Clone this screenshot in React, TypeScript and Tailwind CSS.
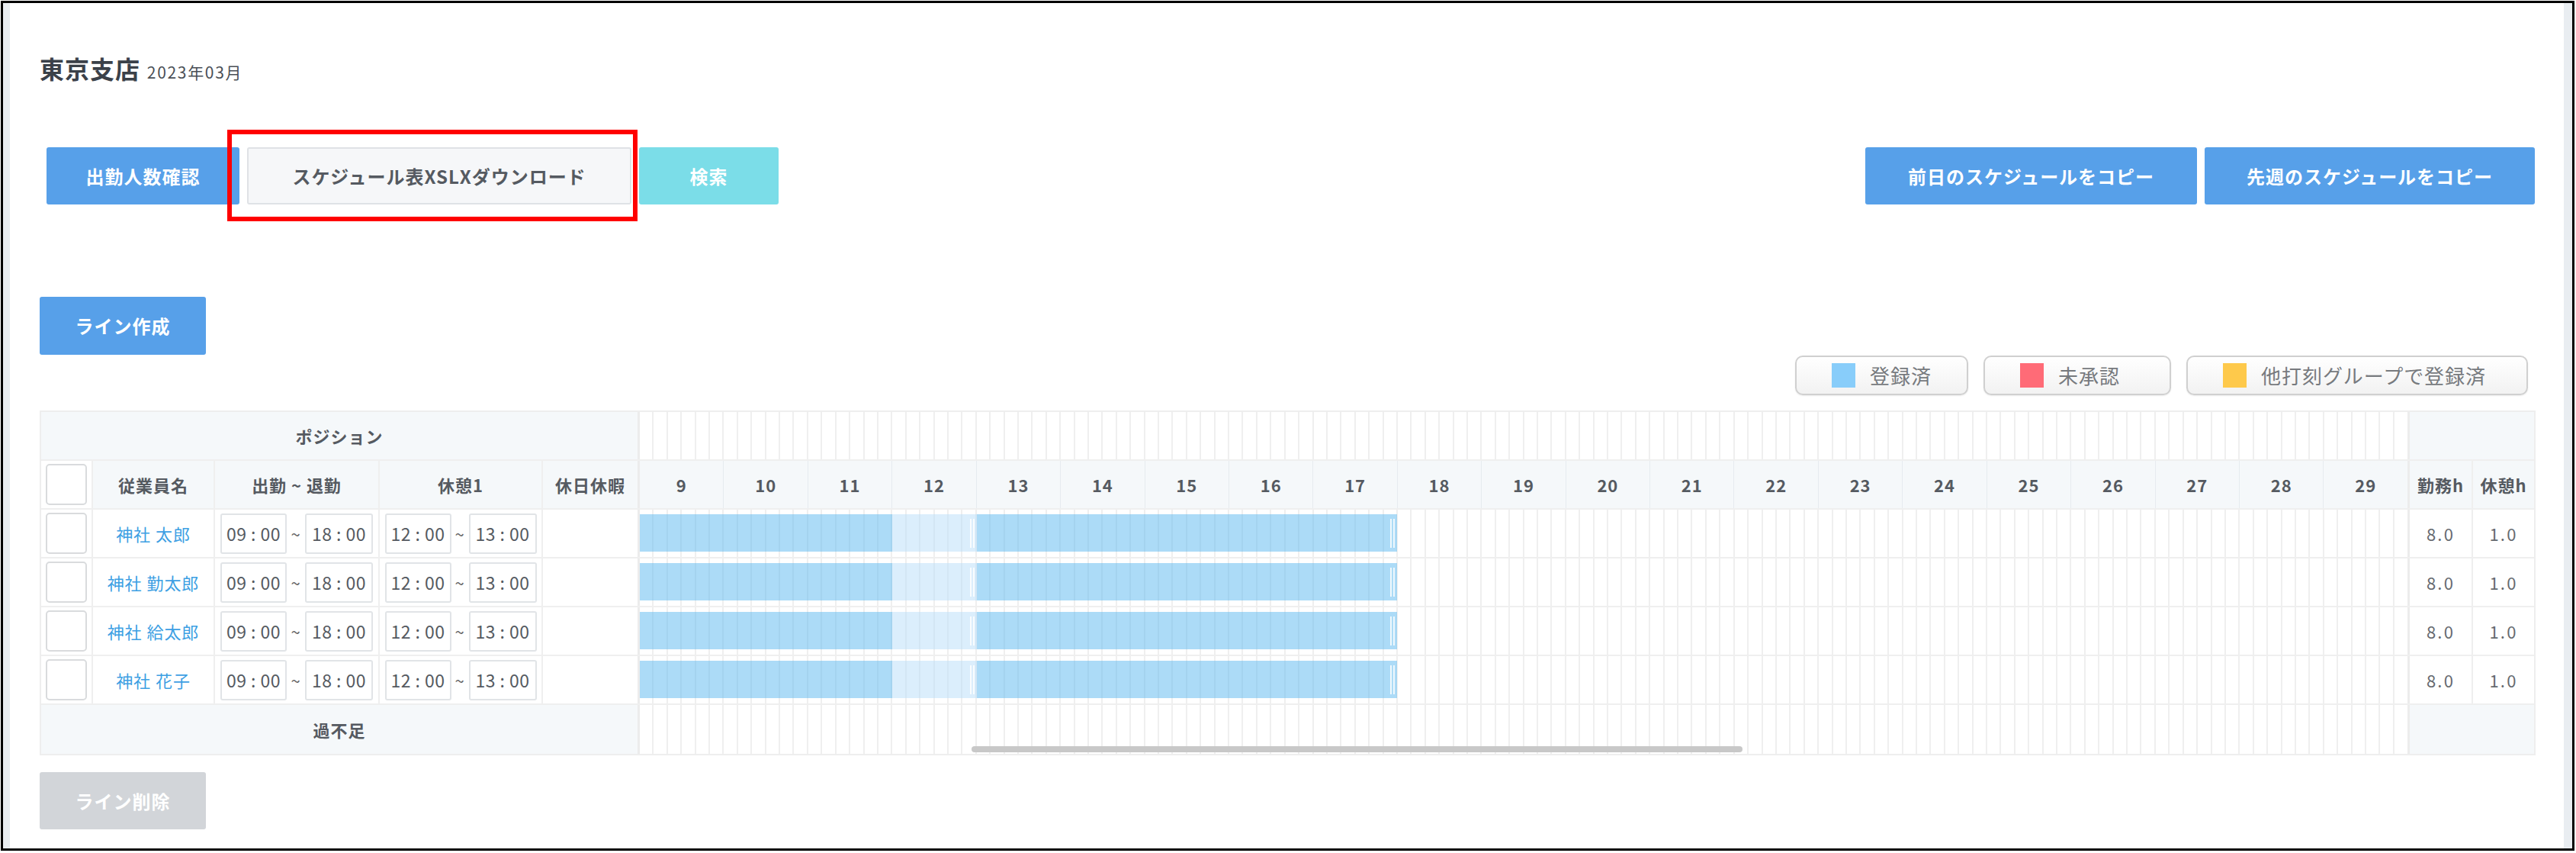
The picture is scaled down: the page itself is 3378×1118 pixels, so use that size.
import React from "react";

const HOURS = Array.from({ length: 21 }, (_, i) => 9 + i);
const SUBS = Array.from({ length: 126 }, (_, i) => i);
const EMPLOYEES = ["神社 太郎", "神社 勤太郎", "神社 給太郎", "神社 花子"];

const pct = (h: number) => `${(h / 21) * 100}%`;

function SubGrid() {
  return (
    <div className="absolute inset-0 flex">
      {SUBS.map((i) => (
        <div key={i} className="flex-1 h-full border-r-2 border-[#efefef] last:border-r-0" />
      ))}
    </div>
  );
}

function Checkbox() {
  return <div className="w-[54px] h-[54px] rounded-[5px] border-2 border-[#d9dbdd] bg-white" />;
}

function TimeBox({ v, w }: { v: string; w: string }) {
  return (
    <div
      className={`${w} h-[53px] border-2 border-[#e1e4e7] rounded-[3px] flex items-center justify-center text-[23px] text-[#555a61] tracking-[0.02em]`}
    >
      {v}
    </div>
  );
}

function Handle() {
  return (
    <div className="absolute right-[3px] top-[6px] bottom-[5px] flex gap-[2px]">
      <div className="w-[2px] h-full bg-white/80" />
      <div className="w-[2px] h-full bg-white/80" />
    </div>
  );
}

function GridPart({ children }: { children?: React.ReactNode }) {
  return (
    <div className="relative w-[2324px] h-full border-l-[3px] border-r-[3px] border-[#ececec]">
      {children}
    </div>
  );
}

const LEGEND = [
  { c: "bg-[#88cdfa]", t: "登録済", w: "w-[227px]" },
  { c: "bg-[#ff6b77]", t: "未承認", w: "w-[246px]" },
  { c: "bg-[#fec94b]", t: "他打刻グループで登録済", w: "w-[448px]" },
];

export default function App() {
  return (
    <div className="w-[3378px] h-[1118px] bg-white pt-px pl-px font-['Noto_Sans_CJK_JP','Noto_Sans',sans-serif] tracking-[0.06em]">
      <div className="w-[3375px] h-[1114px] border-[3px] border-black bg-[#e9edf1] flex">
        <div className="ml-[9px] w-[3349px] h-full bg-white pl-[39px] pt-[69px] flex flex-col">
          {/* Title */}
          <div className="flex items-baseline leading-none">
            <span className="text-[32px] font-bold text-[#3b4149]">東京支店</span>
            <span className="ml-[9px] text-[21px] text-[#4a4f56] tracking-[0.08em]">2023年03月</span>
          </div>

          {/* Button row */}
          <div className="relative mt-[88px] w-[3273px] flex justify-between">
            <div className="ml-[9px] flex gap-[10px]">
              <button className="w-[253px] h-[75px] rounded-[3px] bg-[#57a0e9] text-white text-[24px] font-bold">
                出勤人数確認
              </button>
              <button className="w-[504px] h-[75px] rounded-[3px] bg-[#f6f7f9] border-2 border-[#dfe2e6] text-[#555a61] text-[24px] font-bold">
                スケジュール表XSLXダウンロード
              </button>
              <button className="w-[183px] h-[75px] rounded-[3px] bg-[#7bdde8] text-white text-[24px] font-bold">
                検索
              </button>
            </div>
            <div className="mr-[1px] flex gap-[10px]">
              <button className="w-[435px] h-[75px] rounded-[3px] bg-[#57a0e9] text-white text-[24px] font-bold">
                前日のスケジュールをコピー
              </button>
              <button className="w-[433px] h-[75px] rounded-[3px] bg-[#57a0e9] text-white text-[24px] font-bold">
                先週のスケジュールをコピー
              </button>
            </div>
            <div className="absolute left-[246px] top-[-23px] w-[538px] h-[120px] border-[6px] border-[#ff0000] pointer-events-none" />
          </div>

          {/* ライン作成 */}
          <button className="mt-[121px] w-[218px] h-[76px] rounded-[3px] bg-[#57a0e9] text-white text-[24px] font-bold">
            ライン作成
          </button>

          {/* Legend */}
          <div className="mt-px w-[3273px] pr-[10px] flex justify-end gap-[20px]">
            {LEGEND.map((l) => (
              <div
                key={l.t}
                className={`${l.w} h-[52px] pl-[46px] rounded-[10px] border-2 border-[#d0d0d0] bg-gradient-to-b from-white to-[#f2f2f2] shadow-[0_1px_2px_rgba(0,0,0,0.08)] flex items-center gap-[19px]`}
              >
                <div className={`w-[31px] h-[32px] ${l.c}`} />
                <span className="text-[26px] text-[#777a7e] leading-none">{l.t}</span>
              </div>
            ))}
          </div>

          {/* Table */}
          <div className="mt-[20px] w-[3273px] border-2 border-[#eeeeee] text-[#555a61]">
            {/* Position row */}
            <div className="flex h-[64px] border-b-2 border-[#efefef]">
              <div className="w-[782px] h-full bg-[#f5f8fa] flex items-center justify-center text-[22px] font-bold">
                ポジション
              </div>
              <GridPart>
                <SubGrid />
              </GridPart>
              <div className="w-[163px] h-full bg-[#f5f8fa]" />
            </div>

            {/* Header row */}
            <div className="flex h-[64px] border-b-2 border-[#efefef] text-[22px] font-bold">
              <div className="w-[782px] h-full flex">
                <div className="w-[68px] h-full border-r-2 border-[#efefef] flex items-center justify-center">
                  <Checkbox />
                </div>
                <div className="w-[160px] h-full border-r-2 border-[#efefef] bg-[#f5f8fa] flex items-center justify-center">
                  従業員名
                </div>
                <div className="w-[216px] h-full border-r-2 border-[#efefef] bg-[#f5f8fa] flex items-center justify-center">
                  出勤 ~ 退勤
                </div>
                <div className="w-[214px] h-full border-r-2 border-[#efefef] bg-[#f5f8fa] flex items-center justify-center">
                  休憩1
                </div>
                <div className="w-[124px] h-full bg-[#f5f8fa] flex items-center justify-center">休日休暇</div>
              </div>
              <GridPart>
                <div className="absolute inset-0 flex">
                  {HOURS.map((h) => (
                    <div
                      key={h}
                      className="flex-1 h-full bg-[#f5f8fa] border-r border-[#e6ebef] last:border-r-0 flex items-center justify-center"
                    >
                      {h}
                    </div>
                  ))}
                </div>
              </GridPart>
              <div className="w-[163px] h-full flex bg-[#f5f8fa]">
                <div className="w-[83px] h-full border-r-2 border-[#efefef] flex items-center justify-center">
                  勤務h
                </div>
                <div className="flex-1 h-full flex items-center justify-center">休憩h</div>
              </div>
            </div>

            {/* Data rows */}
            {EMPLOYEES.map((name) => (
              <div key={name} className="flex h-[64px] border-b-2 border-[#efefef]">
                <div className="w-[782px] h-full flex">
                  <div className="w-[68px] h-full border-r-2 border-[#efefef] flex items-center justify-center">
                    <Checkbox />
                  </div>
                  <div className="w-[160px] h-full border-r-2 border-[#efefef] flex items-center justify-center text-[22px] text-[#3d9fe3]">
                    {name}
                  </div>
                  <div className="w-[216px] h-full border-r-2 border-[#efefef] flex items-center justify-center">
                    <TimeBox v="09 : 00" w="w-[87px]" />
                    <span className="w-[24px] text-center text-[22px] text-[#666]">~</span>
                    <TimeBox v="18 : 00" w="w-[89px]" />
                  </div>
                  <div className="w-[214px] h-full border-r-2 border-[#efefef] flex items-center justify-center">
                    <TimeBox v="12 : 00" w="w-[87px]" />
                    <span className="w-[23px] text-center text-[22px] text-[#666]">~</span>
                    <TimeBox v="13 : 00" w="w-[89px]" />
                  </div>
                  <div className="w-[124px] h-full" />
                </div>
                <GridPart>
                  <SubGrid />
                  <div
                    className="absolute top-[6px] h-[49px] bg-[rgba(89,183,239,0.5)]"
                    style={{ left: pct(0), width: pct(3) }}
                  />
                  <div
                    className="absolute top-[6px] h-[49px] bg-[rgba(183,221,249,0.5)]"
                    style={{ left: pct(3), width: pct(1) }}
                  >
                    <Handle />
                  </div>
                  <div
                    className="absolute top-[6px] h-[49px] bg-[rgba(89,183,239,0.5)]"
                    style={{ left: pct(4), width: pct(5) }}
                  >
                    <Handle />
                  </div>
                </GridPart>
                <div className="w-[163px] h-full flex text-[22px] text-[#666a70] tracking-[0.1em]">
                  <div className="w-[83px] h-full border-r-2 border-[#efefef] flex items-center justify-center">
                    8.0
                  </div>
                  <div className="flex-1 h-full flex items-center justify-center">1.0</div>
                </div>
              </div>
            ))}

            {/* 過不足 row */}
            <div className="flex h-[64px]">
              <div className="w-[782px] h-full bg-[#f5f8fa] flex items-center justify-center text-[22px] font-bold">
                過不足
              </div>
              <GridPart>
                <SubGrid />
                <div className="absolute left-[435px] top-[54px] w-[1011px] h-[8px] rounded-full bg-[#c8c8c8]" />
              </GridPart>
              <div className="w-[163px] h-full bg-[#f5f8fa]" />
            </div>
          </div>

          {/* ライン削除 */}
          <button className="mt-[22px] w-[218px] h-[75px] rounded-[3px] bg-[#d2d5d9] text-white text-[24px] font-bold">
            ライン削除
          </button>
        </div>
      </div>
    </div>
  );
}
